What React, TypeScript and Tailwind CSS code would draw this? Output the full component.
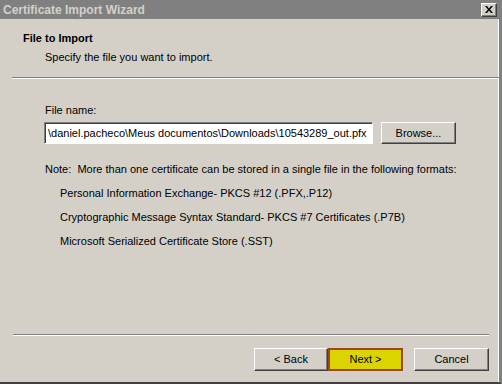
import React from "react";

const raised =
  "border border-t-white border-l-white border-b-[#404040] border-r-[#404040] shadow-[inset_-1px_-1px_0_#808080]";

function Btn({ children, className = "" }: { children: React.ReactNode; className?: string }) {
  return (
    <div className={`flex items-center justify-center bg-[#d4d0c8] text-black ${raised} ${className}`}>
      {children}
    </div>
  );
}

export default function App() {
  return (
    <div
      className="w-[502px] h-[384px] bg-[#d4d0c8] flex flex-col overflow-hidden text-[11px] text-black"
      style={{ fontFamily: "Tahoma, 'Liberation Sans', Arial, sans-serif" }}
    >
      {/* title bar */}
      <div className="h-[19px] bg-[#808080] flex items-center pl-[3px] pr-[5px]">
        <span className="flex-1 font-bold text-[12px] text-[#d4d0c8] leading-none">
          Certificate Import Wizard
        </span>
        <div className={`w-[16px] h-[14px] flex items-center justify-center bg-[#d4d0c8] ${raised}`}>
          <svg width="8" height="7" viewBox="0 0 8 7">
            <path d="M0 0h2l2 2.5L6 0h2L5 3.5 8 7H6L4 4.5 2 7H0l3-3.5z" fill="#000" />
          </svg>
        </div>
      </div>

      {/* body */}
      <div className="flex-1 flex flex-col border-r-[3px] border-r-[#808080] border-b-[2px] border-b-[#404040] shadow-[inset_-1px_0_0_#ffffff]">
        {/* header */}
        <div className="h-[58px] pl-[23px] pt-[12px]">
          <div className="font-bold leading-[14px]">File to Import</div>
          <div className="pl-[22px] pt-[5px] leading-[14px]">Specify the file you want to import.</div>
        </div>
        <div className="ml-[12px] h-[2px] border-t border-t-[#808080] border-b border-b-white" />

        {/* content */}
        <div className="flex-1 flex flex-col pl-[44px] pr-[40px] pt-[24px]">
          <div className="pl-[1px] leading-[14px]">File name:</div>
          <div className="flex items-center gap-[8px] mt-[5px]">
            <div className="w-[329px] h-[22px] bg-white border border-t-[#808080] border-l-[#808080] border-b-white border-r-white shadow-[inset_1px_1px_0_#404040] flex items-center pl-[3px] overflow-hidden whitespace-nowrap">
              \daniel.pacheco\Meus documentos\Downloads\10543289_out.pfx
            </div>
            <Btn className="w-[75px] h-[22px]">Browse...</Btn>
          </div>
          <div className="pl-[1px] mt-[18px] leading-[14px] whitespace-nowrap">
            Note:&nbsp; More than one certificate can be stored in a single file in the following formats:
          </div>
          <div className="pl-[16px] flex flex-col gap-[10px] mt-[10px] leading-[14px]">
            <div>Personal Information Exchange- PKCS #12 (.PFX,.P12)</div>
            <div>Cryptographic Message Syntax Standard- PKCS #7 Certificates (.P7B)</div>
            <div>Microsoft Serialized Certificate Store (.SST)</div>
          </div>
        </div>

        {/* bottom */}
        <div className="ml-[13px] mr-[10px] h-[2px] border-t border-t-[#808080] border-b border-b-white" />
        <div className="h-[46px] flex items-start justify-end pt-[12px] pr-[10px]">
          <Btn className="w-[74px] h-[23px]">&lt; Back</Btn>
          <div className="w-[75px] h-[23px] flex items-center justify-center bg-[#dcd400] border-2 border-[#a0461e]">
            Next &gt;
          </div>
          <Btn className="w-[75px] h-[23px] ml-[11px]">Cancel</Btn>
        </div>
      </div>
    </div>
  );
}
